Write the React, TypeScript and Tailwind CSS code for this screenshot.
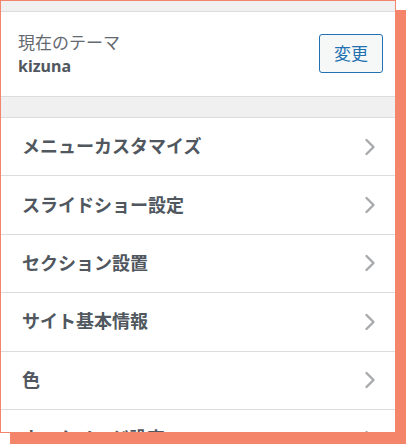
const ITEMS = [
  "メニューカスタマイズ",
  "スライドショー設定",
  "セクション設置",
  "サイト基本情報",
  "色",
  "ホームページ設定",
]

function Chevron() {
  return (
    <svg width="12" height="20" viewBox="0 0 12 20" fill="none" aria-hidden="true">
      <path d="M2.5 3 L9.5 10 L2.5 17" stroke="#a7aaad" strokeWidth="2.4" strokeLinecap="round" strokeLinejoin="round" />
    </svg>
  )
}

export default function App() {
  return (
    <div
      className="relative w-[406px] h-[444px] bg-white overflow-hidden"
      style={{ fontFamily: '"Noto Sans", "Noto Sans CJK JP", sans-serif' }}
    >
      <div className="absolute left-[10px] top-[10px] right-0 bottom-0 bg-[#f4846a]" />
      <div className="relative w-[396px] h-[433px] border border-[#f4846a] bg-white overflow-hidden flex flex-col">
        <div className="h-[11px] shrink-0 bg-[#f0f0f1] border-b border-[#dcdcde]" />
        <div className="h-[85px] shrink-0 flex items-center justify-between pl-[17px] pr-[12px] border-b border-[#dcdcde]">
          <div className="flex flex-col">
            <span className="text-[17px] leading-[22px] text-[#646970]">現在のテーマ</span>
            <span className="text-[16px] leading-[22px] font-bold text-[#50575e] mt-[1px]">kizuna</span>
          </div>
          <button className="w-[64px] h-[39px] rounded-[3px] border border-[#2271b1] bg-[#f6f7f7] text-[17px] text-[#2271b1] mt-[-1px]">
            変更
          </button>
        </div>
        <div className="h-[21px] shrink-0 bg-[#f0f0f1] border-b border-[#dcdcde]" />
        {ITEMS.map(label => (
          <div
            key={label}
            className="h-[58.4px] shrink-0 flex items-center justify-between pl-[21px] pr-[19px] border-b border-[#dcdcde]"
          >
            <span className="text-[18px] font-semibold text-[#50575e]">{label}</span>
            <Chevron />
          </div>
        ))}
      </div>
    </div>
  )
}
